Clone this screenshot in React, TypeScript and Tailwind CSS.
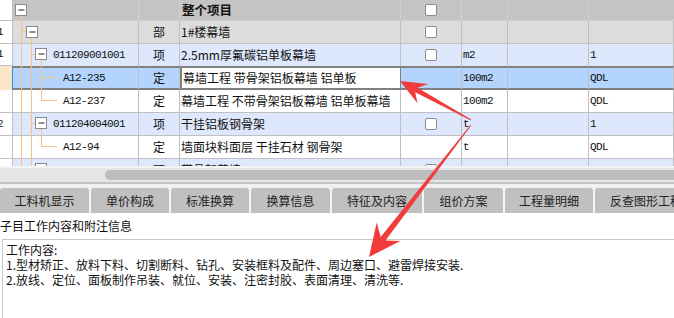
import React from "react";

type Row = {
  num: string;
  level: 1 | 2 | 3;
  code: string;
  kind: string;
  name: string;
  check: boolean;
  unit: string;
  qty: string;
  bg: string;
  selected?: boolean;
  beforeSel?: boolean;
};

const rows: Row[] = [
  { num: "1", level: 1, code: "", kind: "部", name: "1#楼幕墙", check: true, unit: "", qty: "", bg: "bg-[#dcdcdc]" },
  { num: "1", level: 2, code: "011209001001", kind: "项", name: "2.5mm厚氟碳铝单板幕墙", check: true, unit: "m2", qty: "1", bg: "bg-[#dde8fc]", beforeSel: true },
  { num: "", level: 3, code: "A12-235", kind: "定", name: "幕墙工程 带骨架铝板幕墙 铝单板", check: false, unit: "100m2", qty: "QDL", bg: "bg-[#b3d4fc]", selected: true },
  { num: "", level: 3, code: "A12-237", kind: "定", name: "幕墙工程 不带骨架铝板幕墙 铝单板幕墙", check: false, unit: "100m2", qty: "QDL", bg: "bg-white" },
  { num: "2", level: 2, code: "011204004001", kind: "项", name: "干挂铝板钢骨架", check: true, unit: "t", qty: "1", bg: "bg-[#dde8fc]" },
  { num: "", level: 3, code: "A12-94", kind: "定", name: "墙面块料面层 干挂石材 钢骨架", check: false, unit: "t", qty: "QDL", bg: "bg-white" },
  { num: "3", level: 2, code: "011209002001", kind: "项", name: "带骨架幕墙", check: true, unit: "t", qty: "1", bg: "bg-[#dde8fc]" },
];

const tabs: [string, string][] = [
  ["工料机显示", "w-[89px]"],
  ["单价构成", "w-[78px]"],
  ["标准换算", "w-[78px]"],
  ["换算信息", "w-[79px]"],
  ["特征及内容", "w-[90px]"],
  ["组价方案", "w-[79px]"],
  ["工程量明细", "w-[88px]"],
  ["反查图形工程量", "w-[114px]"],
];

const mono = "font-['Liberation_Mono','Noto_Sans_CJK_SC',monospace] text-[11px] tracking-[-0.6px]";

const CheckBox = () => (
  <span className="block w-[12px] h-[12px] rounded-[2px] border border-[#8c8c8c] bg-white" />
);

const TableRow = ({ row }: { row: Row }) => {
  const sel = row.selected;
  const h = sel ? "h-[24px]" : row.beforeSel ? "h-[22px]" : "h-[23px]";
  const line = sel
    ? "border-y-2 border-y-[#808080] border-r border-r-[#c0c0c0]"
    : row.beforeSel
    ? "border-r border-[#c0c0c0]"
    : "border-r border-b border-[#c0c0c0]";
  const cell = `${line} ${row.bg} flex items-center shrink-0`;
  return (
    <div className={`flex ${h}`}>
      <div
        className={`w-[13px] shrink-0 overflow-hidden flex items-center justify-end pr-[9px] border-r ${
          sel ? "bg-[#fde6c8] border-[#3d87ee]" : "bg-white border-[#c0c0c0] border-b"
        } ${mono}`}
      >
        {row.num}
      </div>
      <div className={`${cell} w-[126px] ${row.level === 3 ? "pl-[50px]" : "pl-[40px]"} ${mono}`}>{row.code}</div>
      <div className={`${cell} w-[41px] justify-center`}>{row.kind}</div>
      <div
        className={`${cell} w-[221px] pl-[1px] whitespace-nowrap overflow-hidden ${
          sel ? "!bg-white border-x-2 !border-x-[#808080]" : ""
        }`}
      >
        {row.name}
      </div>
      <div className={`${cell} w-[61px] justify-center`}>{row.check && <CheckBox />}</div>
      <div className={`${cell} w-[46px] pl-[1px] ${mono}`}>{row.unit}</div>
      <div className={`${cell} w-[81px]`} />
      <div className={`${cell} flex-1 pl-[1px] ${mono}`}>{row.qty}</div>
    </div>
  );
};

const TreeLines = () => {
  const c = "#f5c286";
  const boxes: [number, number][] = [
    [15.5, 4.5],
    [26.5, 26.5],
    [35.5, 48.5],
    [35.5, 117.5],
    [35.5, 163.5],
  ];
  return (
    <svg className="absolute left-0 top-0 pointer-events-none" width="140" height="166" viewBox="0 0 140 166">
      <g stroke={c} strokeWidth="1" fill="none">
        <path d="M21.5 16V166M31.5 38V166M41.5 60V100.5M41.5 129V146.5" />
        <path d="M21 31.5H26M31 54.5H35M41 77.5H57M41 100.5H57M31 123.5H35M41 146.5H57" />
      </g>
      {boxes.map(([x, y], i) => (
        <g key={i}>
          <rect x={x} y={y} width="11" height="11" fill="#fff" stroke="#8a8a8a" />
          <path d={`M${x + 3} ${y + 5.5}H${x + 9}`} stroke="#222" strokeWidth="1" />
        </g>
      ))}
    </svg>
  );
};

// tapered arrow, like the ones drawn by screenshot tools
const arrow = (tx: number, ty: number, px: number, py: number, hl: number, hw: number, bw: number) => {
  const len = Math.hypot(px - tx, py - ty);
  const ux = (px - tx) / len;
  const uy = (py - ty) / len;
  const nx = -uy;
  const ny = ux;
  const bx = px - ux * hl;
  const by = py - uy * hl;
  const kx = px - ux * hl * 0.72;
  const ky = py - uy * hl * 0.72;
  const pts = [
    [tx + nx * 0.5, ty + ny * 0.5],
    [kx + (nx * bw) / 2, ky + (ny * bw) / 2],
    [bx + nx * hw, by + ny * hw],
    [px, py],
    [bx - nx * hw, by - ny * hw],
    [kx - (nx * bw) / 2, ky - (ny * bw) / 2],
    [tx - nx * 0.5, ty - ny * 0.5],
  ];
  return pts.map((p) => p.map((v) => v.toFixed(1)).join(",")).join(" ");
};

export default function App() {
  return (
    <div className="relative w-[674px] h-[318px] overflow-hidden bg-white text-[12px] text-[#111] font-['Noto_Sans_CJK_SC','Liberation_Sans',sans-serif]">
      {/* grid */}
      <div className="relative h-[166px] overflow-hidden">
        <div className="flex h-[21px]">
          <div className="w-[13px] shrink-0 bg-white border-r border-b border-[#c0c0c0]" />
          <div className="w-[126px] shrink-0 bg-[#c4c4c4] border-r border-b border-[#cfcfcf]" />
          <div className="w-[41px] shrink-0 bg-[#c4c4c4] border-r border-b border-[#cfcfcf]" />
          <div className="w-[221px] shrink-0 bg-[#c4c4c4] border-r border-b border-[#cfcfcf] pl-[2px] flex items-center font-bold text-[12.5px] text-[#111]">
            整个项目
          </div>
          <div className="w-[61px] shrink-0 bg-[#c4c4c4] border-r border-b border-[#cfcfcf] flex items-center justify-center">
            <CheckBox />
          </div>
          <div className="w-[46px] shrink-0 bg-[#c4c4c4] border-r border-b border-[#cfcfcf]" />
          <div className="w-[81px] shrink-0 bg-[#c4c4c4] border-r border-b border-[#cfcfcf]" />
          <div className="flex-1 bg-[#c4c4c4] border-b border-[#cfcfcf]" />
        </div>
        {rows.map((r, i) => (
          <TableRow key={i} row={r} />
        ))}
        <TreeLines />
      </div>

      {/* horizontal scroll bar */}
      <div className="h-[2px] bg-[#f4f4f4]" />
      <div className="h-[14px] bg-[#e6e6e6] pt-[2px]">
        <div className="ml-[105px] h-[10px] rounded-l-full bg-[#bdbdbd]" />
      </div>
      <div className="h-[2px] bg-[#c4c4c4]" />
      <div className="h-[4px] bg-[#f0f0f0]" />

      {/* tabs */}
      <div className="flex gap-[2px] h-[25px] bg-[#f4f4f4]">
        {tabs.map(([t, w]) => (
          <div
            key={t}
            className={`${w} shrink-0 rounded-t-[3px] bg-[#c0c0c0] flex items-center justify-center text-[12px] text-[#222] whitespace-nowrap`}
          >
            {t}
          </div>
        ))}
      </div>

      <div className="h-[26px] flex items-center">子目工作内容和附注信息</div>

      <div className="ml-[2px] h-[80px] border-t border-l border-[#c8c8c8] pt-[2px] pl-[3px] leading-[15px]">
        <div>工作内容:</div>
        <div>1.型材矫正、放料下料、切割断料、钻孔、安装框料及配件、周边塞口、避雷焊接安装.</div>
        <div>2.放线、定位、面板制作吊装、就位、安装、注密封胶、表面清理、清洗等.</div>
      </div>

      {/* red annotation arrows */}
      <svg className="absolute left-0 top-0 pointer-events-none" width="674" height="318" viewBox="0 0 674 318">
        <polygon points={arrow(471, 120, 400, 81, 26, 11, 5)} fill="#f23b3b" />
        <polygon points={arrow(471, 125, 369, 257, 32, 15, 6)} fill="#f23b3b" />
      </svg>
    </div>
  );
}
